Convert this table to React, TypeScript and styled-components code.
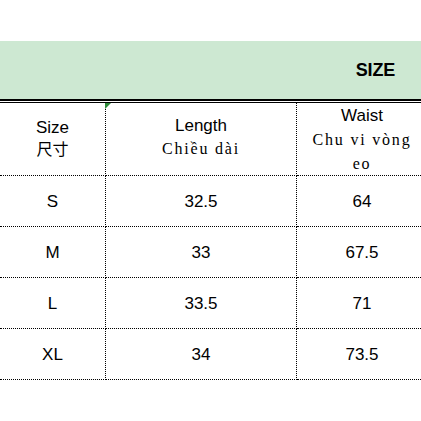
import React from 'react';
import styled, {createGlobalStyle} from "styled-components";

const GlobalStyle = createGlobalStyle`
  html, body {
    margin: 0;
    padding: 0;
    background: #ffffff;
    overflow: hidden;
  }
`

const rows = [
    {size: 'S', length: '32.5', waist: '64'},
    {size: 'M', length: '33', waist: '67.5'},
    {size: 'L', length: '33.5', waist: '71'},
    {size: 'XL', length: '34', waist: '73.5'},
]

function App() {
    return (
        <Page>
            <GlobalStyle/>
            <Banner>
                <BannerTitle>SIZE</BannerTitle>
            </Banner>
            <Gap/>
            <Table>
                <HeadCell>
                    <Label>Size</Label>
                    <Sub cjk>尺寸</Sub>
                </HeadCell>
                <HeadCell>
                    <Marker/>
                    <Label>Length</Label>
                    <Sub>Chiều dài</Sub>
                </HeadCell>
                <HeadCell top>
                    <Label>Waist</Label>
                    <Sub tall>Chu vi vòng<br/>eo</Sub>
                </HeadCell>
                {rows.map(r => (
                    <React.Fragment key={r.size}>
                        <Cell>{r.size}</Cell>
                        <Cell>{r.length}</Cell>
                        <Cell last>{r.waist}</Cell>
                    </React.Fragment>
                ))}
            </Table>
        </Page>
    );
}

const Page = styled.div`
  width: 421px;
  height: 421px;
  padding-top: 41px;
  box-sizing: border-box;
  font-family: "Liberation Sans", Arial, sans-serif;
  color: #000;
`

const Banner = styled.div`
  height: 58px;
  background: #cde8d2;
  border-bottom: 2px solid #000;
  display: flex;
  align-items: center;
  justify-content: flex-end;
  padding-right: 26px;
`

const BannerTitle = styled.span`
  font-weight: bold;
  font-size: 18px;
  letter-spacing: -0.2px;
  margin-top: 1px;
`

const Gap = styled.div`
  height: 1px;
  background: #fff;
  border-bottom: 1px solid #000;
`

const Table = styled.div`
  display: grid;
  grid-template-columns: 106px 191px 130px;
  grid-template-rows: 73px repeat(4, 51px);
`

// "top" is the last column, whose wrapped text is laid from the top edge
const HeadCell = styled.div<{top?: boolean}>`
  position: relative;
  display: flex;
  flex-direction: column;
  align-items: center;
  justify-content: ${p => p.top ? 'flex-start' : 'center'};
  border-bottom: 1px dotted #000;
  border-right: ${p => p.top ? 'none' : '1px dotted #000'};
  text-align: center;
  padding: ${p => p.top ? '3px 0 0' : '0 0 2px'};
  box-sizing: border-box;
`

const Marker = styled.span`
  position: absolute;
  top: 0;
  left: -1px;
  width: 0;
  height: 0;
  border-top: 6px solid #2e8b3a;
  border-right: 6px solid transparent;
`

const Label = styled.div`
  font-size: 17px;
  line-height: 20px;
`

const Sub = styled.div<{cjk?: boolean, tall?: boolean}>`
  font-family: ${p => p.cjk ? '"Noto Sans CJK SC", sans-serif' : '"Liberation Serif", "Times New Roman", serif'};
  font-size: 16px;
  letter-spacing: ${p => p.cjk ? '0' : '1.8px'};
  line-height: ${p => p.cjk ? '20px' : p.tall ? '24px' : '22px'};
  margin-top: ${p => p.cjk ? '0' : '2px'};
`

const Cell = styled.div<{last?: boolean}>`
  display: flex;
  align-items: center;
  justify-content: center;
  font-size: 17px;
  padding-top: 2px;
  border-bottom: 1px dotted #000;
  border-right: ${p => p.last ? 'none' : '1px dotted #000'};
  box-sizing: border-box;
`

export default App;
